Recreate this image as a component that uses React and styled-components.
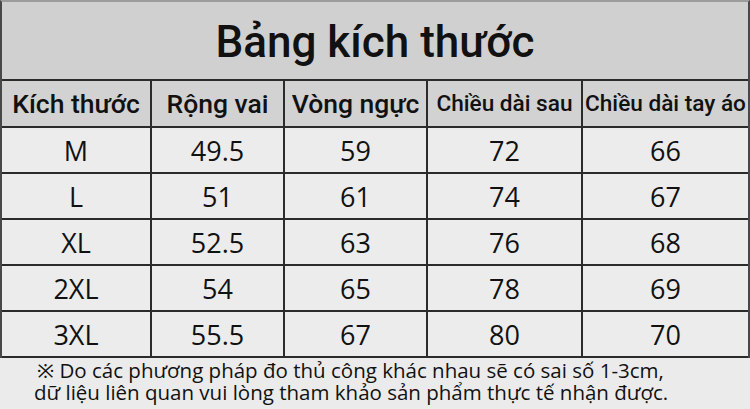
import React from 'react';
import styled, { createGlobalStyle } from 'styled-components';

const GlobalStyle = createGlobalStyle`
  html, body {
    margin: 0;
    padding: 0;
    background: #ebebeb;
  }
`;

const Page = styled.div`
  width: 750px;
  height: 409px;
  overflow: hidden;
  background: #ebebeb;
  display: flex;
  flex-direction: column;
`;

const Frame = styled.div`
  box-sizing: border-box;
  width: 750px;
  border-top: 2px solid #9c9c9c;
  border-left: 2px solid #484848;
  border-right: 2px solid #484848;
`;

const Title = styled.h1`
  margin: 0;
  height: 77px;
  background: #d0d0d0;
  display: flex;
  align-items: center;
  justify-content: center;
  font-family: Roboto, "Liberation Sans", sans-serif;
  font-weight: 500;
  font-size: 44px;
  color: #111;
  padding-top: 2px;
  box-sizing: border-box;
`;

const Grid = styled.div`
  display: grid;
  grid-template-columns: 148px 131px 141px 153px 165px;
  grid-auto-rows: 44px;
  grid-template-rows: 45px;
  gap: 2px;
  padding: 2px 0;
  background: #2b2b2b;
`;

const HeadCell = styled.div`
  background: #d2d2d2;
  display: flex;
  align-items: center;
  justify-content: center;
  white-space: nowrap;
  font-family: Roboto, "Liberation Sans", sans-serif;
  font-weight: 500;
  font-size: ${p => (p.$small ? '22.6px' : '26.5px')};
  color: #111;
`;

const Cell = styled.div`
  background: #ececec;
  display: flex;
  align-items: center;
  justify-content: center;
  font-family: "Open Sans", "Noto Sans", sans-serif;
  font-size: 27px;
  color: #111;
`;

const Note = styled.div`
  flex: 1;
  padding: 1px 0 0 34px;
  font-family: "Open Sans", "Noto Sans", sans-serif;
  font-size: 20.5px;
  line-height: 22px;
  color: #111;
  white-space: nowrap;
`;

const NoteLine = styled.div`
  padding-left: ${p => p.$indent || 0}px;
`;

const headers = [
  { label: 'Kích thước' },
  { label: 'Rộng vai' },
  { label: 'Vòng ngực' },
  { label: 'Chiều dài sau', small: true },
  { label: 'Chiều dài tay áo', small: true },
];

const rows = [
  ['M', '49.5', '59', '72', '66'],
  ['L', '51', '61', '74', '67'],
  ['XL', '52.5', '63', '76', '68'],
  ['2XL', '54', '65', '78', '69'],
  ['3XL', '55.5', '67', '80', '70'],
];

export default function App() {
  return (
    <Page>
      <GlobalStyle />
      <Frame>
        <Title>Bảng kích thước</Title>
        <Grid>
          {headers.map(h => (
            <HeadCell key={h.label} $small={h.small}>{h.label}</HeadCell>
          ))}
          {rows.map(r =>
            r.map((v, i) => <Cell key={r[0] + i}>{v}</Cell>)
          )}
        </Grid>
      </Frame>
      <Note>
        <NoteLine $indent={3}>※ Do các phương pháp đo thủ công khác nhau sẽ có sai số 1-3cm,</NoteLine>
        <NoteLine>dữ liệu liên quan vui lòng tham khảo sản phẩm thực tế nhận được.</NoteLine>
      </Note>
    </Page>
  );
}
